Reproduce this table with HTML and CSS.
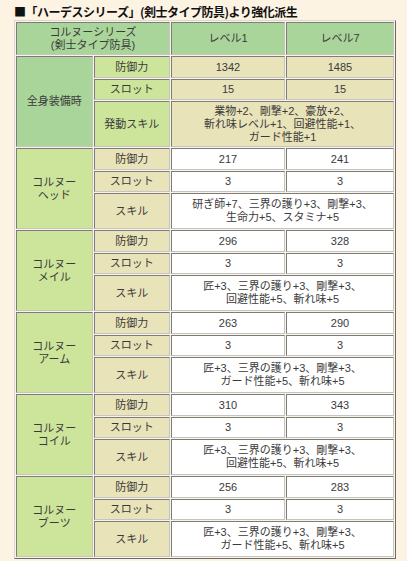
FILE: index.html
```html
<!DOCTYPE html>
<html lang="ja">
<head>
<meta charset="utf-8">
<link rel="stylesheet" href="styles.css">
</head>
<body>
<div class="page">
  <h1 class="title">■「ハーデスシリーズ」(剣士タイプ防具)より強化派生</h1>
  <table class="armor">
    <tr class="r-head">
      <td class="hd" colspan="2">コルヌーシリーズ<br>(剣士タイプ防具)</td>
      <td class="hd">レベル1</td>
      <td class="hd">レベル7</td>
    </tr>
    <tr class="r-a">
      <td class="grp-set" rowspan="3">全身装備時</td>
      <td class="lab-set">防御力</td>
      <td class="val-set">1342</td>
      <td class="val-set">1485</td>
    </tr>
    <tr class="r-b">
      <td class="lab-set">スロット</td>
      <td class="val-set">15</td>
      <td class="val-set">15</td>
    </tr>
    <tr class="r-set">
      <td class="lab-set">発動スキル</td>
      <td class="val-set" colspan="2">業物+2、剛撃+2、豪放+2、<br>斬れ味レベル+1、回避性能+1、<br>ガード性能+1</td>
    </tr>

    <tr class="r-a">
      <td class="grp" rowspan="3">コルヌー<br>ヘッド</td>
      <td class="lab">防御力</td>
      <td class="val">217</td>
      <td class="val">241</td>
    </tr>
    <tr class="r-b">
      <td class="lab">スロット</td>
      <td class="val">3</td>
      <td class="val">3</td>
    </tr>
    <tr class="r-c">
      <td class="lab">スキル</td>
      <td class="val" colspan="2">研ぎ師+7、三界の護り+3、剛撃+3、<br>生命力+5、スタミナ+5</td>
    </tr>

    <tr class="r-a">
      <td class="grp" rowspan="3">コルヌー<br>メイル</td>
      <td class="lab">防御力</td>
      <td class="val">296</td>
      <td class="val">328</td>
    </tr>
    <tr class="r-b">
      <td class="lab">スロット</td>
      <td class="val">3</td>
      <td class="val">3</td>
    </tr>
    <tr class="r-c">
      <td class="lab">スキル</td>
      <td class="val" colspan="2">匠+3、三界の護り+3、剛撃+3、<br>回避性能+5、斬れ味+5</td>
    </tr>

    <tr class="r-a">
      <td class="grp" rowspan="3">コルヌー<br>アーム</td>
      <td class="lab">防御力</td>
      <td class="val">263</td>
      <td class="val">290</td>
    </tr>
    <tr class="r-b">
      <td class="lab">スロット</td>
      <td class="val">3</td>
      <td class="val">3</td>
    </tr>
    <tr class="r-c">
      <td class="lab">スキル</td>
      <td class="val" colspan="2">匠+3、三界の護り+3、剛撃+3、<br>ガード性能+5、斬れ味+5</td>
    </tr>

    <tr class="r-a">
      <td class="grp" rowspan="3">コルヌー<br>コイル</td>
      <td class="lab">防御力</td>
      <td class="val">310</td>
      <td class="val">343</td>
    </tr>
    <tr class="r-b">
      <td class="lab">スロット</td>
      <td class="val">3</td>
      <td class="val">3</td>
    </tr>
    <tr class="r-c">
      <td class="lab">スキル</td>
      <td class="val" colspan="2">匠+3、三界の護り+3、剛撃+3、<br>回避性能+5、斬れ味+5</td>
    </tr>

    <tr class="r-a">
      <td class="grp" rowspan="3">コルヌー<br>ブーツ</td>
      <td class="lab">防御力</td>
      <td class="val">256</td>
      <td class="val">283</td>
    </tr>
    <tr class="r-b">
      <td class="lab">スロット</td>
      <td class="val">3</td>
      <td class="val">3</td>
    </tr>
    <tr class="r-c">
      <td class="lab">スキル</td>
      <td class="val" colspan="2">匠+3、三界の護り+3、剛撃+3、<br>ガード性能+5、斬れ味+5</td>
    </tr>
  </table>
</div>
</body>
</html>
```

FILE: styles.css
```css
html, body {
  margin: 0;
  padding: 0;
  background: #fdf3e3;
}
.page {
  padding: 4px 11px 0 14px;
  font-family: "Noto Sans CJK JP", "Liberation Sans", sans-serif;
}
.title {
  margin: 0 0 1px 0;
  font-size: 12px;
  line-height: 15px;
  font-weight: bold;
  color: #111;
  letter-spacing: -0.5px;
}
.armor {
  width: 382px;
  border-collapse: separate;
  border-spacing: 1px;
  border: 1px solid;
  border-color: #d8d8d8 #6a6a6a #6a6a6a #d8d8d8;
  table-layout: fixed;
  font-family: "Liberation Sans", "Noto Sans CJK JP", sans-serif;
  font-size: 11px;
  line-height: 13px;
  color: #3a3a3a;
}
.armor td {
  border: 1px solid;
  border-color: #7c7c7c #c4c4c4 #c4c4c4 #7c7c7c;
  text-align: center;
  vertical-align: middle;
  padding: 0 2px;
}
.r-head td { height: 31px; }
.r-a td { height: 20px; }
.r-b td { height: 19px; }
.r-set td { height: 44px; }
.r-c td { height: 34px; }

.hd { background: #aad59a; }
.grp-set { background: #aad59a; }
.lab-set { background: #cde59b; }
.val-set { background: #e9e3b9; }
.grp { background: #cde59b; }
.lab { background: #e9e3b9; }
.val { background: #ffffff; }

.r-head .hd:first-child { width: 148px; }
.r-head .hd:nth-child(2) { width: 108px; }
.r-a .grp, .r-a .grp-set { width: 75px; }
```
